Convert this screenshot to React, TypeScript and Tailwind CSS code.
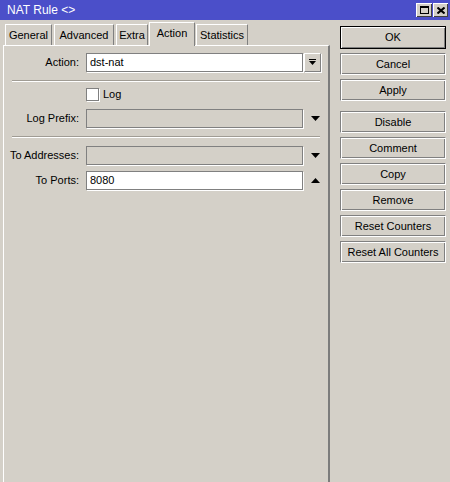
// NAT rule dialog, Winbox-style classic window.
import React from "react";

const FONT = { fontFamily: '"Liberation Sans", Arial, sans-serif' };

const bevelBtn =
  "flex items-center justify-center h-[22px] w-full text-[11px] text-black bg-[#d4d0c8] border border-t-[#808080] border-l-[#808080] border-b-white border-r-white shadow-[inset_1px_1px_0_#ffffff,inset_-1px_-1px_0_#808080]";

function Tab({ label, active, width }: { label: string; active?: boolean; width: number }) {
  return (
    <div
      style={{ width }}
      className={
        active
          ? "relative z-10 -mx-[1px] -mb-[1px] flex h-[24px] items-center justify-center border-l border-t border-l-white border-t-white border-r border-r-[#808080] bg-[#d4d0c8] pb-[2px] text-[11px]"
          : "flex h-[21px] items-center justify-center border-l border-t border-l-white border-t-white border-r border-r-[#808080] bg-[#d4d0c8] text-[11px]"
      }
    >
      {label}
    </div>
  );
}

function Field({
  label,
  value,
  disabled,
  children,
}: {
  label: string;
  value?: string;
  disabled?: boolean;
  children?: React.ReactNode;
}) {
  return (
    <div className="flex h-[19px] items-center">
      <div className="w-[76px] pr-[1px] text-right text-[11px]">{label}</div>
      <div
        className={`ml-[6px] flex h-[19px] w-[217px] items-center border border-[#808080] pl-[3px] text-[11px] shadow-[1px_1px_0_#ffffff] ${
          disabled ? "bg-[#d4d0c8]" : "bg-white"
        }`}
      >
        {value}
      </div>
      <div className="ml-[1px] flex h-[19px] w-[17px] items-center justify-center">{children}</div>
    </div>
  );
}

function Separator() {
  return <div className="mx-[8px] h-[2px] border-t border-t-[#a09c94] border-b border-b-white" />;
}

function TriDown() {
  return (
    <svg width="9" height="5" viewBox="0 0 9 5" className="ml-[5px]">
      <path d="M0 0H9L4.5 5Z" fill="#000" />
    </svg>
  );
}

function TriUp() {
  return (
    <svg width="9" height="5" viewBox="0 0 9 5" className="ml-[5px]">
      <path d="M0 5H9L4.5 0Z" fill="#000" />
    </svg>
  );
}

export default function App() {
  return (
    <div style={FONT} className="flex h-[482px] w-[450px] flex-col overflow-hidden bg-[#d4d0c8] text-black">
      {/* title bar */}
      <div className="flex h-[20px] items-center justify-between bg-[#4b4fc9] pl-[7px] pr-[2px]">
        <span className="text-[12px] text-white">NAT Rule &lt;&gt;</span>
        <div className="flex gap-[1px]">
          <div className="flex h-[14px] w-[16px] items-center justify-center bg-[#d4d0c8] shadow-[inset_1px_1px_0_#ffffff,inset_-1px_-1px_0_#404040]">
            <div className="h-[8px] w-[9px] border border-black border-t-2" />
          </div>
          <div className="flex h-[14px] w-[15px] items-center justify-center bg-[#d4d0c8] shadow-[inset_1px_1px_0_#ffffff,inset_-1px_-1px_0_#404040]">
            <svg width="8" height="7" viewBox="0 0 8 7">
              <path d="M0.5 0.5L7.5 6.5M7.5 0.5L0.5 6.5" stroke="#000" strokeWidth="2" />
            </svg>
          </div>
        </div>
      </div>

      <div className="flex min-h-0 flex-1">
        {/* left: tabs + panel */}
        <div className="ml-[3px] flex w-[327px] flex-col pt-[1px]">
          <div className="flex h-[24px] items-end gap-[2px] pl-[2px]">
            <Tab label="General" width={47} />
            <Tab label="Advanced" width={60} />
            <Tab label="Extra" width={32} />
            <Tab label="Action" width={46} active />
            <Tab label="Statistics" width={52} />
          </div>
          <div className="flex flex-1 flex-col border-l border-t border-l-white border-t-white border-r-2 border-r-[#7c7c7c] pt-[7px]">
            <Field label="Action:" value="dst-nat">
              <div className="flex h-[19px] w-[17px] items-center justify-center border border-t-white border-l-white border-b-[#808080] border-r-[#808080] shadow-[1px_1px_0_#ffffff]">
                <svg width="9" height="7" viewBox="0 0 9 7">
                  <rect x="1" y="0" width="7" height="1" fill="#000" />
                  <path d="M1 2H8L4.5 6Z" fill="#000" />
                </svg>
              </div>
            </Field>
            <div className="mt-[8px]">
              <Separator />
            </div>
            <div className="mt-[6px] flex h-[13px] items-center">
              <div className="ml-[82px] h-[13px] w-[13px] border border-[#808080] bg-white shadow-[1px_1px_0_#ffffff]" />
              <span className="ml-[4px] text-[11px]">Log</span>
            </div>
            <div className="mt-[8px]">
              <Field label="Log Prefix:" disabled>
                <TriDown />
              </Field>
            </div>
            <div className="mt-[8px]">
              <Separator />
            </div>
            <div className="mt-[8px]">
              <Field label="To Addresses:" disabled>
                <TriDown />
              </Field>
            </div>
            <div className="mt-[6px]">
              <Field label="To Ports:" value="8080">
                <TriUp />
              </Field>
            </div>
          </div>
        </div>

        {/* right: buttons */}
        <div className="ml-[10px] flex w-[106px] flex-col gap-[4px] pt-[6px]">
          <div className="h-[23px] w-full border border-black">
            <div className={bevelBtn + " !h-[21px] !border-0"}>OK</div>
          </div>
          <div className={bevelBtn}>Cancel</div>
          <div className={bevelBtn}>Apply</div>
          <div className="mt-[6px]" />
          <div className={bevelBtn + " -mt-[4px]"}>Disable</div>
          <div className={bevelBtn}>Comment</div>
          <div className={bevelBtn}>Copy</div>
          <div className={bevelBtn}>Remove</div>
          <div className={bevelBtn}>Reset Counters</div>
          <div className={bevelBtn}>Reset All Counters</div>
        </div>
      </div>
    </div>
  );
}
